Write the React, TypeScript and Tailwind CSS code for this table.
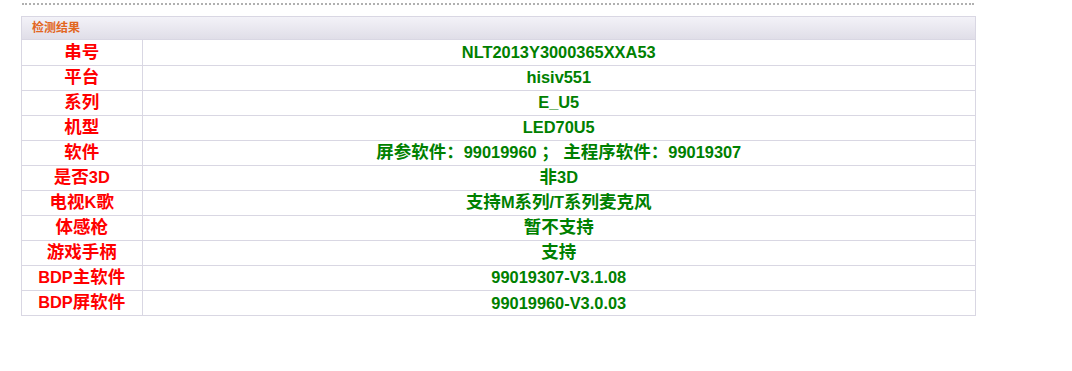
const ROWS: [string, string][] = [
  ["串号", "NLT2013Y3000365XXA53"],
  ["平台", "hisiv551"],
  ["系列", "E_U5"],
  ["机型", "LED70U5"],
  ["软件", "屏参软件：99019960 ； 主程序软件：99019307"],
  ["是否3D", "非3D"],
  ["电视K歌", "支持M系列/T系列麦克风"],
  ["体感枪", "暂不支持"],
  ["游戏手柄", "支持"],
  ["BDP主软件", "99019307-V3.1.08"],
  ["BDP屏软件", "99019960-V3.0.03"],
];

// CJK glyphs render a bit larger than the Latin text in the original page
function Mixed({ text }: { text: string }) {
  const parts = text.split(/([\u3000-\u9fff\uff00-\uffef]+)/);
  return (
    <>
      {parts.map((p, i) =>
        /[\u3000-\u9fff\uff00-\uffef]/.test(p) ? (
          <span key={i} className="text-[17.5px]">
            {p}
          </span>
        ) : (
          <span key={i}>{p}</span>
        )
      )}
    </>
  );
}

export default function App() {
  return (
    <div
      className="w-[1072px] h-[371px] bg-white"
      style={{ fontFamily: '"Liberation Sans", "Noto Sans CJK SC", sans-serif' }}
    >
      <div className="pt-[3px] pl-[22px]">
        <div className="w-[952px] border-t-2 border-dotted border-[#b0b0b0]" />
      </div>
      <div className="ml-[21px] mt-[11px] w-[955px] border border-[#d9d7e3]">
        <div className="h-[23px] bg-gradient-to-b from-[#f3f2f8] to-[#e0dee8] border-b border-[#d9d7e3] flex items-center pl-[10px]">
          <span className="text-[12px] font-bold text-[#e2661f]">检测结果</span>
        </div>
        <table className="w-full border-collapse">
          <tbody>
            {ROWS.map(([label, value], i) => (
              <tr
                key={label}
                className={i < ROWS.length - 1 ? "border-b border-[#d9d7e3]" : ""}
              >
                <td className="w-[120px] h-[25px] p-0 text-center text-[16.4px] font-bold text-[#ff0000] leading-none border-r border-[#d9d7e3]">
                  <Mixed text={label} />
                </td>
                <td className="h-[25px] p-0 text-center text-[16.4px] font-bold text-[#008000] leading-none">
                  <Mixed text={value} />
                </td>
              </tr>
            ))}
          </tbody>
        </table>
      </div>
    </div>
  );
}
